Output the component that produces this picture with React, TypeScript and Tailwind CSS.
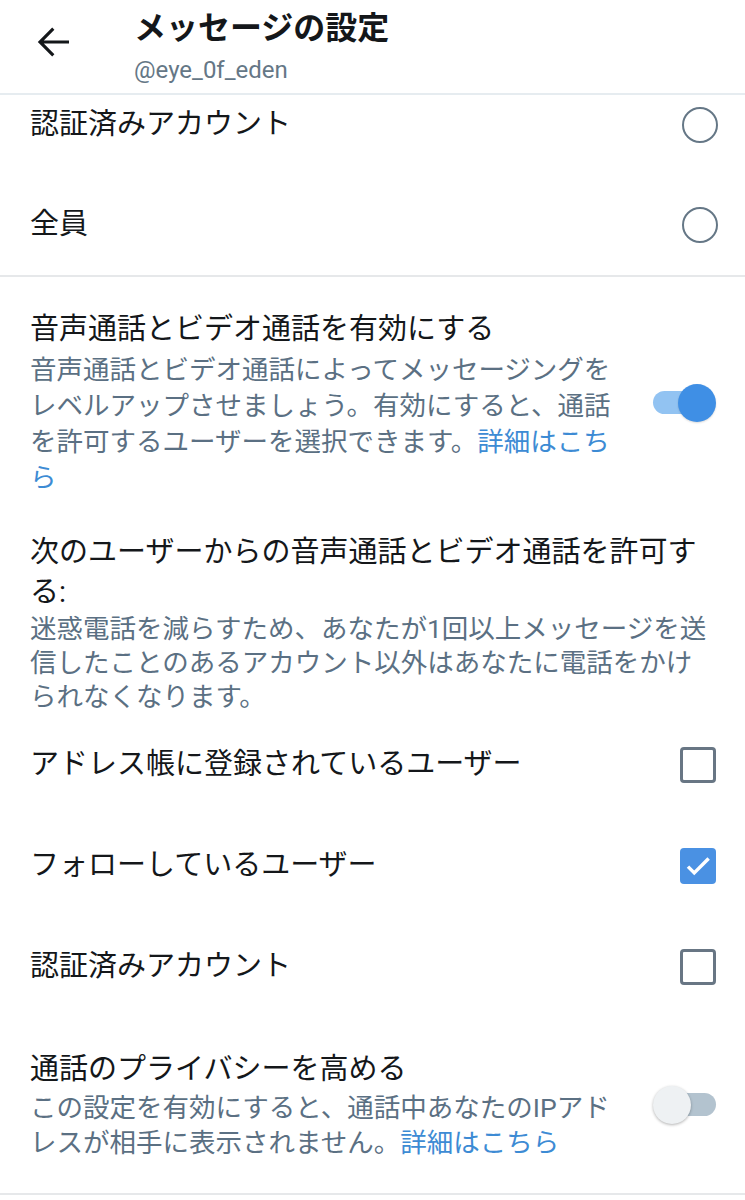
import type { ReactNode } from 'react'

const font = "font-['Roboto','Noto_Sans_CJK_JP',sans-serif]"

function BackArrow() {
  return (
    <svg width="48" height="48" viewBox="0 0 24 24" className="shrink-0">
      <path fill="#14171a" d="M20 11.2H7.4l5.3-5.3L11.6 4.8 4.4 12l7.2 7.2 1.1-1.1-5.3-5.3H20z" />
    </svg>
  )
}

function Radio() {
  return <div className="w-[36px] h-[36px] rounded-full border-[2.5px] border-[#657786] shrink-0" />
}

function Checkbox({ checked }: { checked?: boolean }) {
  if (checked) {
    return (
      <div className="w-[36px] h-[36px] rounded-[4px] bg-[#4a91e3] flex items-center justify-center shrink-0">
        <svg width="30" height="30" viewBox="0 0 24 24">
          <path d="M4 12.5l5 5L20.5 6" fill="none" stroke="white" strokeWidth="2.8" />
        </svg>
      </div>
    )
  }
  return <div className="w-[36px] h-[36px] rounded-[4px] border-[3px] border-[#687684] shrink-0" />
}

function Toggle({ on }: { on?: boolean }) {
  if (on) {
    return (
      <div className="relative w-[63px] h-[38px] shrink-0 flex items-center">
        <div className="w-[60px] h-[23px] rounded-full bg-[#92c3f2]" />
        <div className="absolute right-0 top-0 w-[38px] h-[38px] rounded-full bg-[#3f8fe5] shadow-[0_1px_2px_rgba(0,0,0,0.15)]" />
      </div>
    )
  }
  return (
    <div className="relative w-[63px] h-[38px] shrink-0 flex items-center justify-end">
      <div className="w-[60px] h-[23px] rounded-full bg-[#b3c3cf]" />
      <div className="absolute left-0 top-0 w-[38px] h-[38px] rounded-full bg-[#eef1f3] shadow-[0_1px_3px_rgba(0,0,0,0.3)]" />
    </div>
  )
}

function Row({ label, children }: { label: string; children: ReactNode }) {
  return (
    <div className="h-[101px] flex items-center justify-between pl-[30px] pr-[29px]">
      <span className="text-[29px] text-[#14171a]">{label}</span>
      {children}
    </div>
  )
}

function Link({ children }: { children: ReactNode }) {
  return <span className="text-[#3d8bd4]">{children}</span>
}

export default function App() {
  return (
    <div className={`w-[745px] h-[1200px] bg-white overflow-hidden ${font}`}>
      <header className="h-[95px] border-b-2 border-[#e6ecf0] flex items-start">
        <div className="ml-[29px] mt-[18px] w-[105px]">
          <BackArrow />
        </div>
        <div className="flex flex-col">
          <h1 className="text-[32px] leading-[40px] mt-[8px] font-bold text-[#14171a]">メッセージの設定</h1>
          <div className="text-[24px] leading-[30px] mt-[7px] text-[#657786]">@eye_0f_eden</div>
        </div>
      </header>

      <div className="overflow-hidden">
        <div className="-mt-[20px]">
          <div className="h-[100px] flex items-center justify-between pl-[30px] pr-[27px]">
            <span className="text-[29px] text-[#14171a]">認証済みアカウント</span>
            <Radio />
          </div>
          <div className="h-[100px] flex items-center justify-between pl-[30px] pr-[27px]">
            <span className="text-[29px] text-[#14171a]">全員</span>
            <Radio />
          </div>
        </div>
        <div className="h-[2px] bg-[#e6e8ea]" />

        <section className="pt-[32px] pl-[30px] pr-[29px] flex items-center gap-[20px]">
          <div className="flex-1">
            <div className="text-[29px] leading-[40px] text-[#14171a]">音声通話とビデオ通話を有効にする</div>
            <p className="mt-[3px] text-[26.5px] leading-[36px] text-[#5b7083]">
              音声通話とビデオ通話によってメッセージングをレベルアップさせましょう。有効にすると、通話を許可するユーザーを選択できます。<Link>詳細はこちら</Link>
            </p>
          </div>
          <Toggle on />
        </section>

        <section className="pt-[36px] px-[30px]">
          <div className="text-[29px] leading-[40px] text-[#14171a]">次のユーザーからの音声通話とビデオ通話を許可する:</div>
          <p className="text-[26.5px] leading-[34px] text-[#5b7083]">
            迷惑電話を減らすため、あなたが1回以上メッセージを送信したことのあるアカウント以外はあなたに電話をかけられなくなります。
          </p>
        </section>

        <Row label="アドレス帳に登録されているユーザー">
          <Checkbox />
        </Row>
        <Row label="フォローしているユーザー">
          <Checkbox checked />
        </Row>
        <Row label="認証済みアカウント">
          <Checkbox />
        </Row>

        <section className="pt-[32px] pb-[33px] pl-[30px] pr-[29px] flex items-center gap-[20px] border-b-2 border-[#e6e8ea]">
          <div className="flex-1">
            <div className="text-[29px] leading-[40px] text-[#14171a]">通話のプライバシーを高める</div>
            <p className="mt-[1px] text-[26.5px] leading-[35px] text-[#5b7083]">
              この設定を有効にすると、通話中あなたのIPアドレスが相手に表示されません。<Link>詳細はこちら</Link>
            </p>
          </div>
          <Toggle />
        </section>
      </div>
    </div>
  )
}
